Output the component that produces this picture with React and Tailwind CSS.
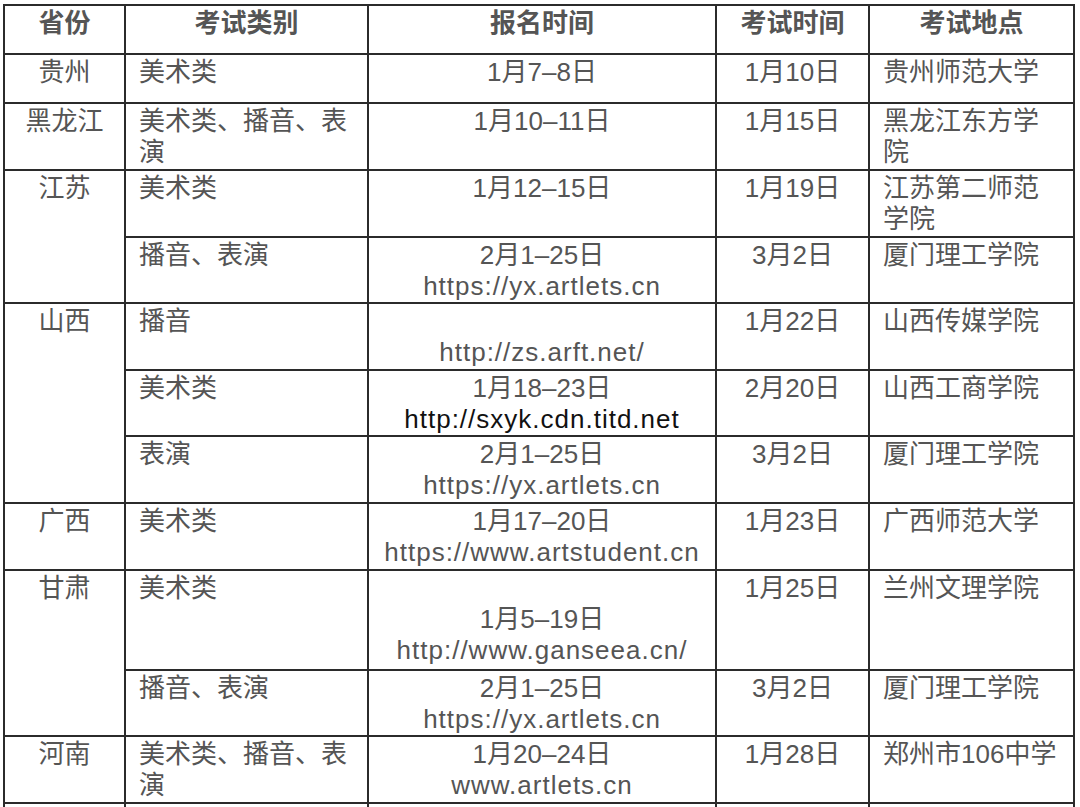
import React from "react";

const FONT = { fontFamily: '"Liberation Sans", "Noto Sans CJK SC", sans-serif' };

const td = "border-2 border-[#2b2b2b] align-top pt-[2px] leading-[31px] text-[26px] text-[#555]";
const center = `${td} text-center`;
const left = `${td} text-left pl-[13px] pr-[10px]`;

// one registration cell may hold a date and a site on two lines
function Lines({ items }) {
  return items.map((t, i) => {
    const text = t && t.dark ? t.text : t;
    const isUrl = text && text.includes(".");
    return (
      <div key={i} className={`${t && t.dark ? "text-[#111]" : ""} ${isUrl ? "tracking-[1px]" : ""}`}>
        {text || "\u00a0"}
      </div>
    );
  });
}

const rows = [
  { h: "h-[49px]", prov: "贵州", cat: ["美术类"], reg: ["1月7–8日"], exam: "1月10日", place: ["贵州师范大学"] },
  { h: "h-[67px]", prov: "黑龙江", cat: ["美术类、播音、表", "演"], reg: ["1月10–11日"], exam: "1月15日", place: ["黑龙江东方学", "院"] },
  { h: "h-[67px]", prov: "江苏", span: 2, cat: ["美术类"], reg: ["1月12–15日"], exam: "1月19日", place: ["江苏第二师范", "学院"] },
  { h: "h-[66px]", cat: ["播音、表演"], reg: ["2月1–25日", "https://yx.artlets.cn"], exam: "3月2日", place: ["厦门理工学院"] },
  { h: "h-[67px]", prov: "山西", span: 3, cat: ["播音"], reg: ["", "http://zs.arft.net/"], exam: "1月22日", place: ["山西传媒学院"] },
  { h: "h-[66px]", cat: ["美术类"], reg: ["1月18–23日", { text: "http://sxyk.cdn.titd.net", dark: true }], exam: "2月20日", place: ["山西工商学院"] },
  { h: "h-[67px]", cat: ["表演"], reg: ["2月1–25日", "https://yx.artlets.cn"], exam: "3月2日", place: ["厦门理工学院"] },
  { h: "h-[67px]", prov: "广西", cat: ["美术类"], reg: ["1月17–20日", "https://www.artstudent.cn"], exam: "1月23日", place: ["广西师范大学"] },
  { h: "h-[100px]", prov: "甘肃", span: 2, cat: ["美术类"], reg: ["", "1月5–19日", "http://www.ganseea.cn/"], exam: "1月25日", place: ["兰州文理学院"] },
  { h: "h-[66px]", cat: ["播音、表演"], reg: ["2月1–25日", "https://yx.artlets.cn"], exam: "3月2日", place: ["厦门理工学院"] },
  { h: "h-[67px]", prov: "河南", cat: ["美术类、播音、表", "演"], reg: ["1月20–24日", "www.artlets.cn"], exam: "1月28日", place: ["郑州市106中学"] },
];

export default function App() {
  return (
    <div className="bg-white min-h-screen" style={FONT}>
      {/* title line above the table, cut off by the crop */}
      <div className="h-[4px] overflow-hidden pl-[30px]">
        <div className="-mt-[30px] text-[26px] leading-[32px] font-bold text-[#1a1a1a]">
          一、全国各地艺考统考时间汇总
        </div>
      </div>
      <table className="ml-[3px] border-collapse table-fixed w-[1070px]">
        <colgroup>
          <col className="w-[121px]" />
          <col className="w-[243px]" />
          <col className="w-[348px]" />
          <col className="w-[153px]" />
          <col className="w-[205px]" />
        </colgroup>
        <thead>
          <tr className="h-[49px]">
            {["省份", "考试类别", "报名时间", "考试时间", "考试地点"].map((h) => (
              <th key={h} className={`${center} font-bold text-[#3a3a3a]`}>
                {h}
              </th>
            ))}
          </tr>
        </thead>
        <tbody>
          {rows.map((r, i) => (
            <tr key={i} className={r.h}>
              {r.prov ? (
                <td rowSpan={r.span || 1} className={center}>
                  {r.prov}
                </td>
              ) : null}
              <td className={left}>
                <Lines items={r.cat} />
              </td>
              <td className={center}>
                <Lines items={r.reg} />
              </td>
              <td className={center}>{r.exam}</td>
              <td className={left}>
                <Lines items={r.place} />
              </td>
            </tr>
          ))}
          <tr className="h-[60px]">
            <td className={center} />
            <td className={left} />
            <td className={center} />
            <td className={center} />
            <td className={left} />
          </tr>
        </tbody>
      </table>
    </div>
  );
}
